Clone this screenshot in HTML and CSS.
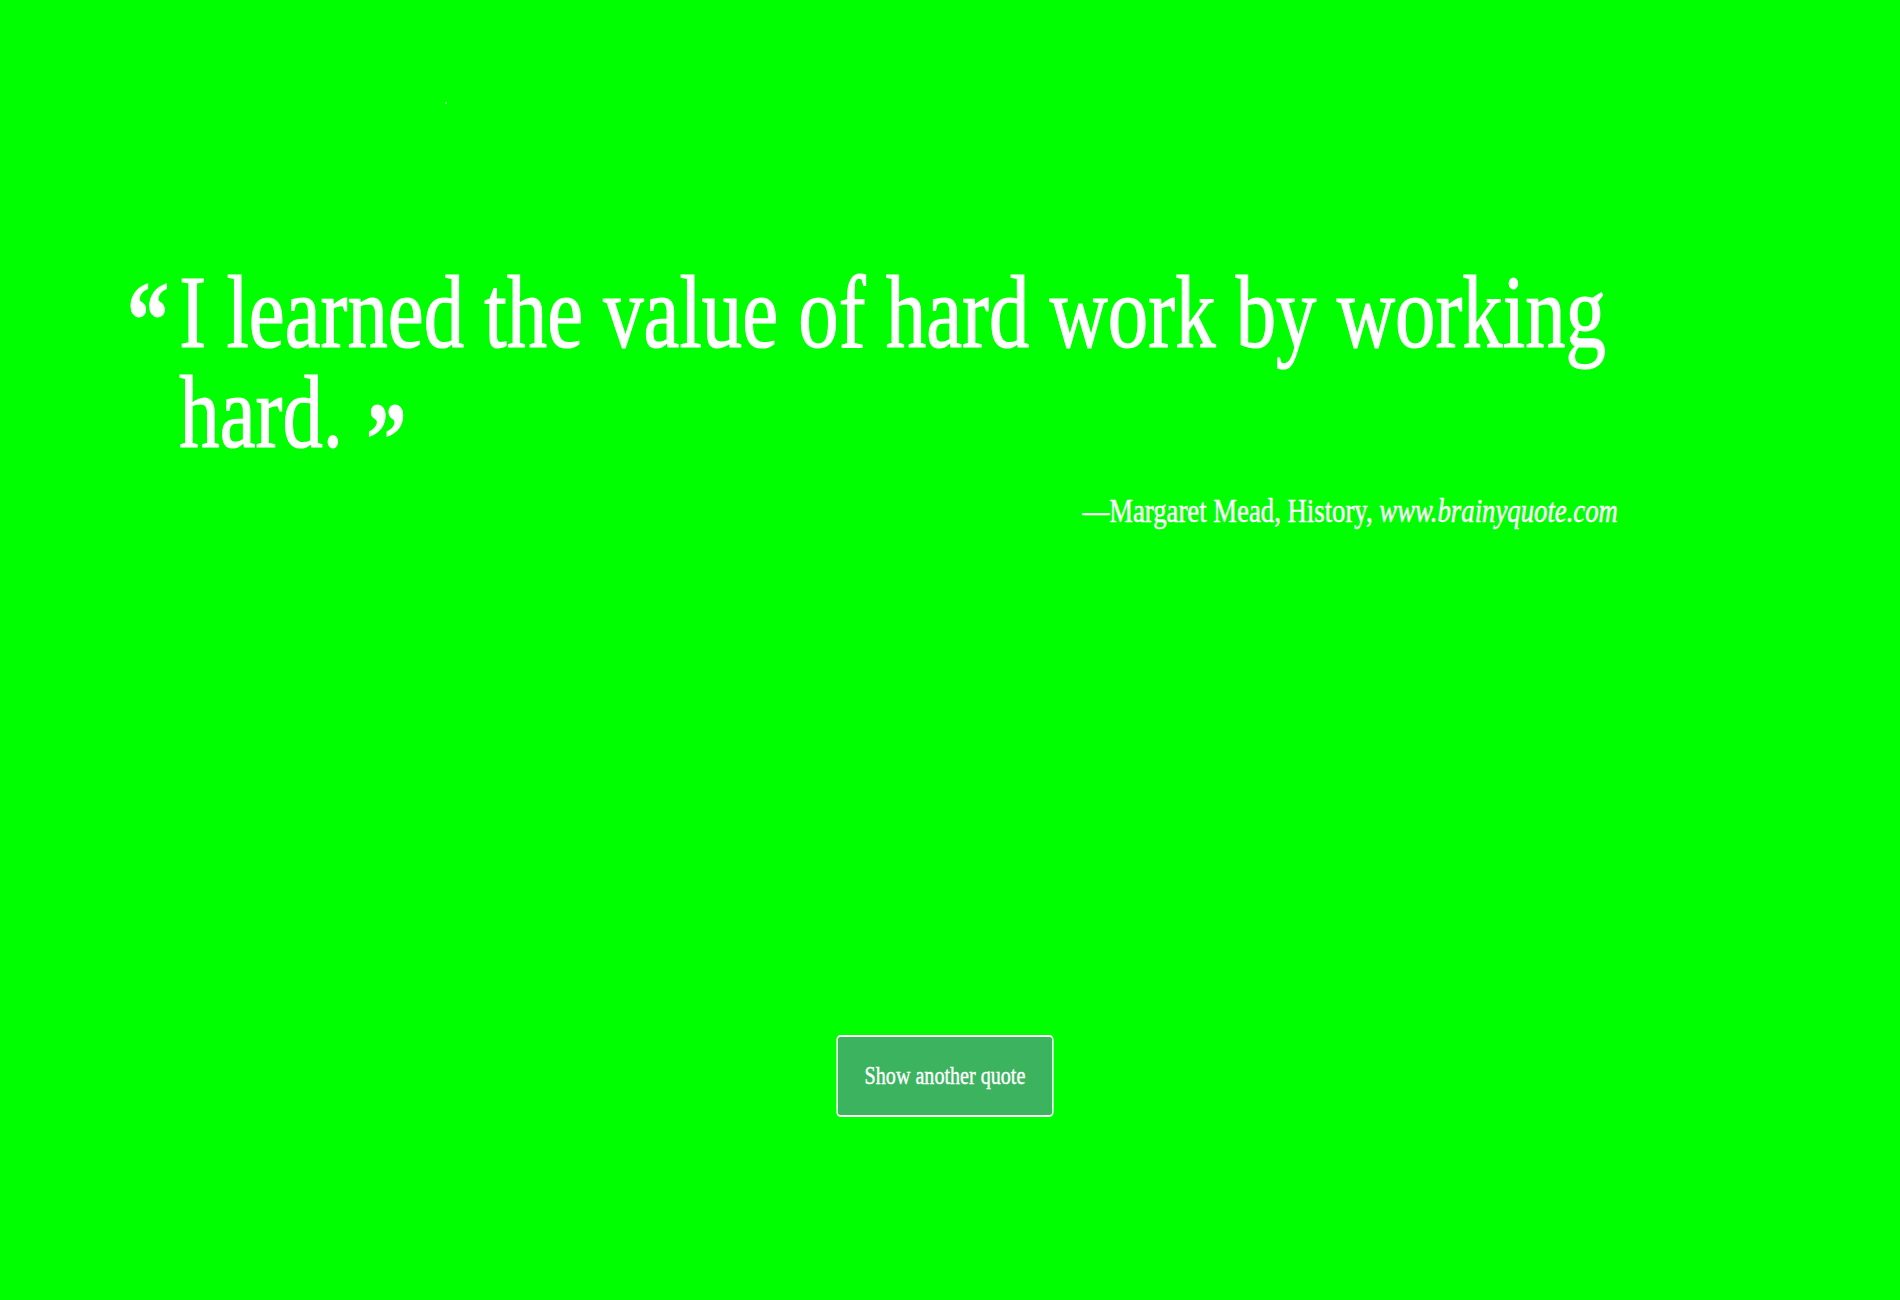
FILE: index.html
```html
<!DOCTYPE html>
<html lang="en">
<head>
<meta charset="utf-8">
<title>Random Quote</title>
<link rel="stylesheet" href="styles.css">
</head>
<body>
<main class="stage">
  <div class="dot-row"><span class="dot"></span></div>
  <blockquote class="quote">
    <span class="mark-open">“</span>
    <div class="quote-body">
      <p class="quote-text">I learned the value of hard work by working hard.<span class="mark-close">”</span></p>
      <p class="author">—Margaret Mead, History, <cite class="source">www.brainyquote.com</cite></p>
    </div>
  </blockquote>
  <div class="actions">
    <button class="btn-next" type="button">Show another quote</button>
  </div>
</main>
</body>
</html>
```
FILE: styles.css
```css
html, body {
  margin: 0;
  padding: 0;
}
body {
  background: #00ff00;
  width: 1900px;
  height: 1300px;
  overflow: hidden;
  font-family: "Liberation Serif", "Times New Roman", serif;
  color: #ffffff;
}
.stage {
  width: 2458px;
  transform: scaleX(0.773);
  transform-origin: 0 0;
}
.dot-row {
  padding: 102px 0 0 576px;
  height: 2px;
  display: flex;
}
.dot {
  width: 2px;
  height: 2px;
  background: #9cff9c;
}
.quote {
  margin: 158px 0 0 0;
  padding: 0 0 0 164px;
  width: 1929px;
  display: flex;
}
.mark-open {
  flex: 0 0 68px;
  font-weight: bold;
  font-size: 110px;
  line-height: 100px;
  margin-top: 8px;
  -webkit-text-stroke: 0.8px #ffffff;
}
.quote-body {
  flex: 1;
  display: flex;
  flex-direction: column;
}
.quote-text {
  margin: 0;
  font-size: 104.5px;
  line-height: 100px;
  -webkit-text-stroke: 1.2px #ffffff;
}
.mark-close {
  display: inline-block;
  font-weight: bold;
  font-size: 104px;
  margin-left: 30px;
  vertical-align: -27px;
  line-height: 0;
  -webkit-text-stroke: 0.8px #ffffff;
}
.author {
  margin: 28px 0 0 0;
  font-size: 34.6px;
  line-height: 40px;
  text-align: right;
  -webkit-text-stroke: 0.5px #ffffff;
}
.source {
  font-style: italic;
}
.actions {
  margin-top: 505px;
  display: flex;
  justify-content: center;
  padding-right: 13px;
}
.btn-next {
  font-family: "Liberation Serif", "Times New Roman", serif;
  font-size: 26px;
  line-height: 31px;
  color: #ffffff;
  background: #3cb35f;
  border: 2px solid #ffffff;
  border-radius: 5px;
  padding: 23px 35px 24px;
  -webkit-text-stroke: 0.4px #ffffff;
}
```
